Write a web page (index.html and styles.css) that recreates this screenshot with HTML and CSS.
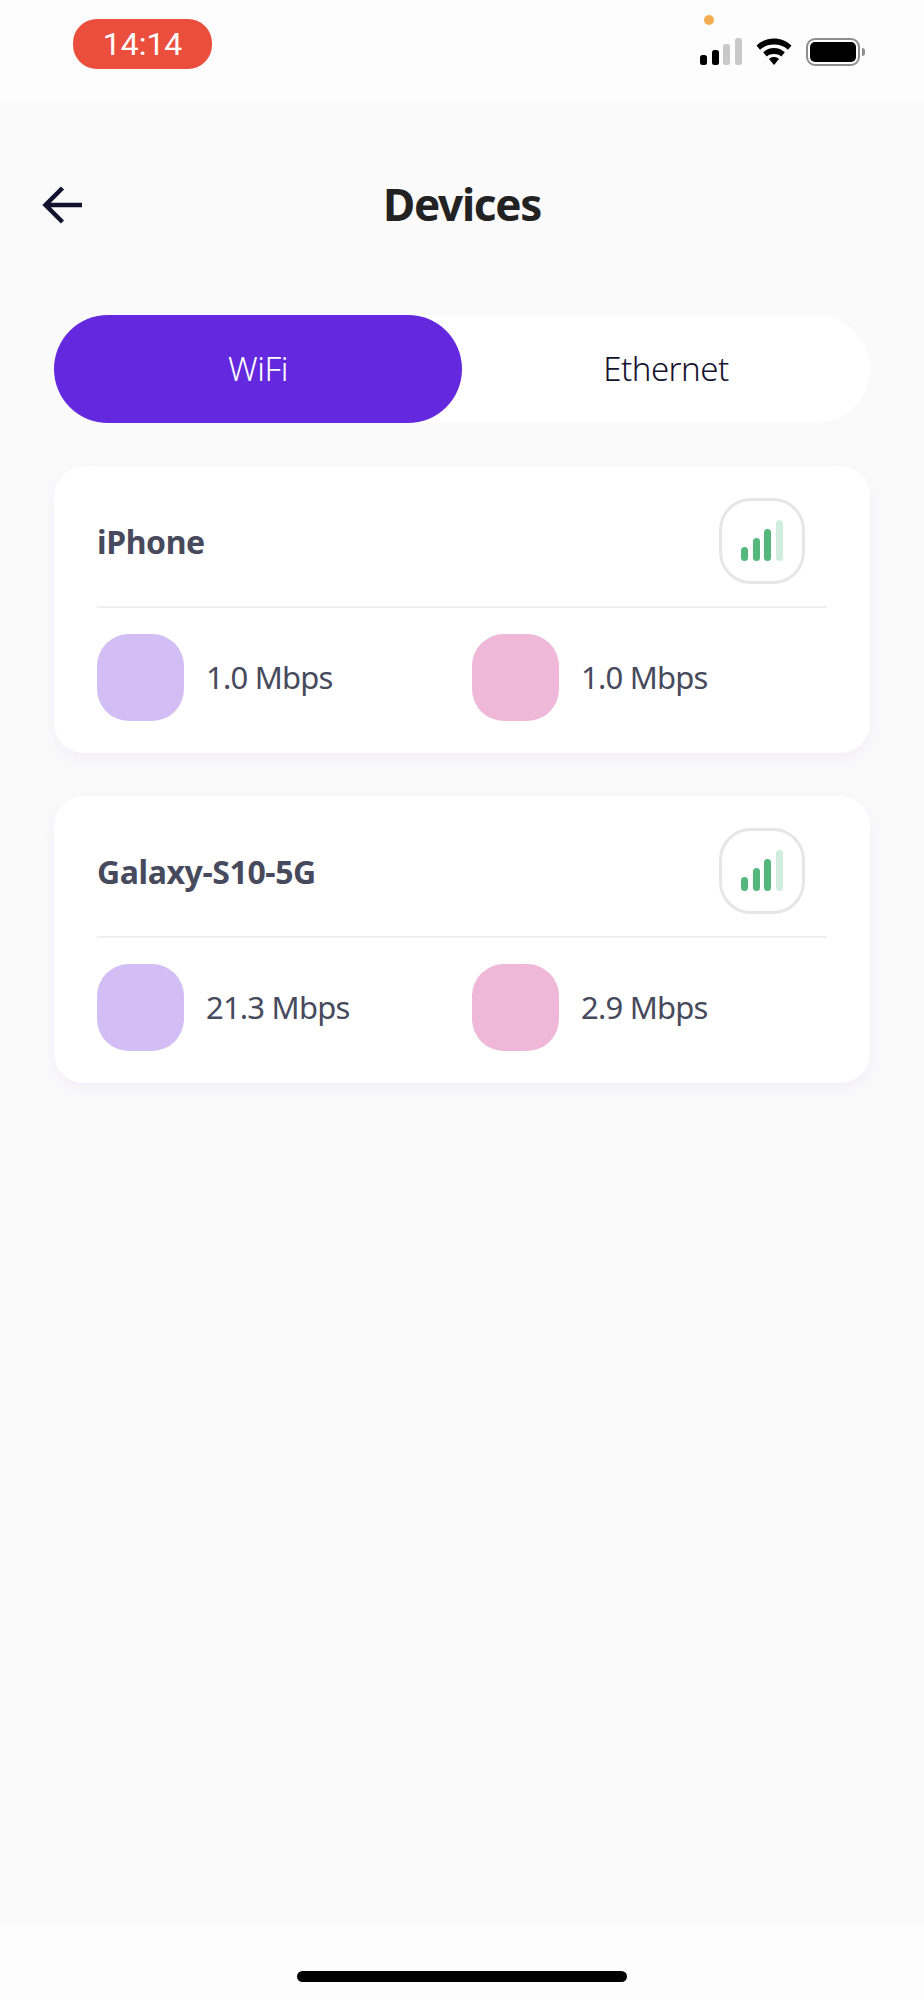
FILE: index.html
```html
<!DOCTYPE html>
<html lang="en">
<head>
<meta charset="utf-8">
<title>Devices</title>
<link rel="stylesheet" href="styles.css">
</head>
<body>
<div class="screen">
  <header class="status">
    <div class="time">14:14</div>
    <div class="status-icons">
      <span class="dot"></span>
      <svg class="sig" width="42" height="28" viewBox="0 0 42 28"><rect x="0" y="17" width="7" height="10" rx="2.5" fill="#000"/><rect x="12" y="12" width="7" height="15" rx="2.5" fill="#000"/><rect x="23" y="6" width="7" height="21" rx="2.5" fill="#c9c9c9"/><rect x="35" y="0" width="7" height="27" rx="2.5" fill="#c9c9c9"/></svg>
      <svg class="wifi" width="36" height="28" viewBox="0 0 36 28"><path d="M18 0.500C11.400 0.500 5.500 3 0.500 7.500L4 11.800C8 8.200 12.700 6.600 18 6.600S28 8.200 32 11.800L35.500 7.500C30.500 3 24.600 0.500 18 0.500Z" fill="#000"/><path d="M18 10C13.800 10 10.200 11.500 7.200 14.200L10.700 18.500C12.800 16.700 15.200 16 18 16S23.200 16.700 25.300 18.500L28.800 14.200C25.800 11.500 22.200 10 18 10Z" fill="#000"/><path d="M18 19C16.200 19 14.600 19.600 13 20.900L18 27L23 20.900C21.400 19.600 19.800 19 18 19Z" fill="#000"/></svg>
      <div class="battery"><div class="battery-body"><div class="battery-fill"></div></div><div class="battery-tip"></div></div>
    </div>
  </header>
  <main class="main">
    <div class="topbar">
      <svg class="back" width="42" height="40" viewBox="0 0 42 40"><path d="M41 20H5M21.500 3L4.500 20L21.500 37" fill="none" stroke="#14122e" stroke-width="4.500"/></svg>
      <h1 class="title">Devices</h1>
    </div>
    <div class="tabs">
      <div class="tab tab-active">WiFi</div>
      <div class="tab">Ethernet</div>
    </div>
    <section class="card">
      <div class="card-head">
        <div class="name">iPhone</div>
        <div class="strength">
          <span class="bar b1"></span><span class="bar b2"></span><span class="bar b3"></span><span class="bar b4"></span>
        </div>
      </div>
      <div class="rates">
        <div class="rate"><span class="tile tile-down"></span><span class="speed">1.0 Mbps</span></div>
        <div class="rate"><span class="tile tile-up"></span><span class="speed">1.0 Mbps</span></div>
      </div>
    </section>
    <section class="card">
      <div class="card-head">
        <div class="name">Galaxy-S10-5G</div>
        <div class="strength">
          <span class="bar b1"></span><span class="bar b2"></span><span class="bar b3"></span><span class="bar b4"></span>
        </div>
      </div>
      <div class="rates">
        <div class="rate"><span class="tile tile-down"></span><span class="speed">21.3 Mbps</span></div>
        <div class="rate"><span class="tile tile-up"></span><span class="speed">2.9 Mbps</span></div>
      </div>
    </section>
  </main>
  <footer class="home"><div class="home-bar"></div></footer>
</div>
</body>
</html>
```
FILE: styles.css
```css
* { box-sizing: border-box; }
html, body { margin: 0; padding: 0; }
body { font-family: "Noto Sans", "Open Sans", sans-serif; background: #fdfdfd; }
.screen { width: 924px; height: 2000px; display: flex; flex-direction: column; overflow: hidden; }

.status { height: 102px; background: #fdfdfd; display: flex; justify-content: space-between; padding: 19px 59px 0 73px; flex: none; }
.time { width: 139px; height: 50px; border-radius: 24px; background: #ec4e3e; color: #fff; font-family: Roboto, sans-serif; font-size: 32px; font-weight: 450; line-height: 50px; text-align: center; }
.status-icons { position: relative; display: flex; align-items: flex-start; padding-top: 19px; }
.dot { position: absolute; left: 4px; top: -4px; width: 10px; height: 10px; border-radius: 50%; background: #f4ac50; }
.sig { margin-right: 14px; }
.wifi { margin-right: 14px; }
.battery { display: flex; align-items: center; height: 28px; }
.battery-body { width: 54px; height: 28px; border: 2px solid #8e8e8e; border-radius: 9px; padding: 2px; }
.battery-fill { width: 100%; height: 100%; background: #000; border-radius: 5px; }
.battery-tip { width: 3px; height: 8px; background: #8e8e8e; border-radius: 0 4px 4px 0; margin-left: 2px; }

.main { flex: 1; background: #fafafa; padding: 0 54px; display: flex; flex-direction: column; }
.topbar { position: relative; height: 213px; display: flex; justify-content: center; padding-top: 72px; }
.back { position: absolute; left: -13px; top: 83px; }
.title { margin: 0; font-size: 44px; line-height: 60px; font-weight: 700; color: #222; letter-spacing: -1.3px; }

.tabs { display: flex; height: 108px; background: #fff; border-radius: 54px; margin-bottom: 43px; flex: none; }
.tab { flex: 1; display: flex; align-items: center; justify-content: center; padding-bottom: 2px; font-size: 33px; font-weight: 350; letter-spacing: -0.5px; color: #14122e; border-radius: 54px; }
.tab-active { background: #6428de; color: #fff; font-weight: 300; }

.card { background: #fff; border-radius: 30px; height: 287px; padding: 0 43px; margin-bottom: 43px; box-shadow: 0 6px 16px rgba(100, 37, 224, 0.05); flex: none; }
.card-head { height: 142px; border-bottom: 2px solid #efefef; display: flex; align-items: center; justify-content: space-between; padding: 10px 22px 0 0; }
.name { font-size: 32px; font-weight: 700; color: #474a5c; letter-spacing: -0.4px; }
.strength { width: 86px; height: 86px; border: 3px solid #e6e6e6; border-radius: 32px; display: flex; align-items: flex-end; justify-content: center; gap: 4.400px; padding-bottom: 20px; }
.bar { width: 7px; border-radius: 4px; background: #54b87c; }
.b1 { height: 14px; }
.b2 { height: 23px; }
.b3 { height: 32px; }
.b4 { height: 41px; background: #cfeee0; }

.rates { display: flex; padding-top: 26px; }
.rate { width: 375px; flex: none; display: flex; align-items: center; gap: 22px; }
.tile { width: 87px; height: 87px; border-radius: 32px; flex: none; }
.tile-down { background: #d2bef4; }
.tile-up { background: #efb7d8; }
.speed { font-size: 31px; font-weight: 380; color: #474a5c; letter-spacing: -0.8px; padding-bottom: 2px; }

.home { height: 74px; background: #fdfdfd; display: flex; justify-content: center; padding-top: 45px; flex: none; }
.home-bar { width: 330px; height: 11px; border-radius: 6px; background: #000; }
```
